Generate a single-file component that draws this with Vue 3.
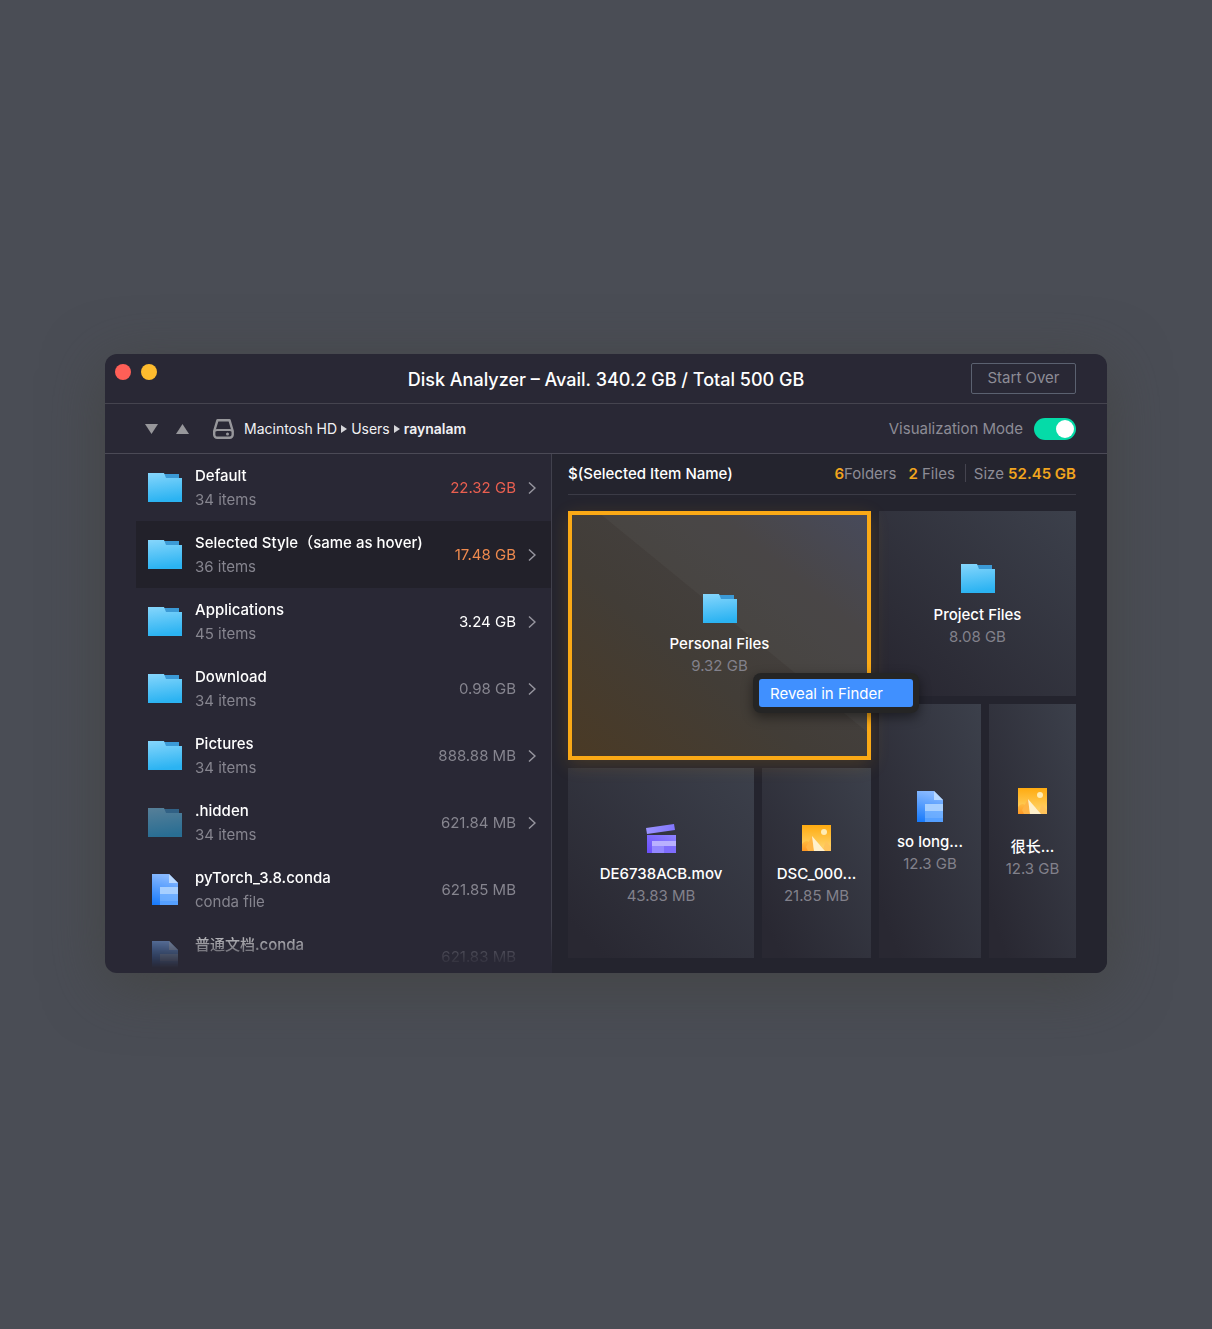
<script setup>
import { ref } from 'vue'

const visualization = ref(true)

const rows = [
  { name: 'Default', sub: '34 items', size: '22.32 GB', tone: 'hot', icon: 'folder', open: true },
  { name: 'Selected Style（same as hover)', sub: '36 items', size: '17.48 GB', tone: 'warm', icon: 'folder', open: true, selected: true },
  { name: 'Applications', sub: '45 items', size: '3.24 GB', tone: 'plain', icon: 'folder', open: true },
  { name: 'Download', sub: '34 items', size: '0.98 GB', tone: 'dim', icon: 'folder', open: true },
  { name: 'Pictures', sub: '34 items', size: '888.88 MB', tone: 'dim', icon: 'folder', open: true },
  { name: '.hidden', sub: '34 items', size: '621.84 MB', tone: 'dim', icon: 'folder', open: true, ghost: true },
  { name: 'pyTorch_3.8.conda', sub: 'conda file', size: '621.85 MB', tone: 'dim', icon: 'file' },
  { name: '普通文档.conda', sub: '', size: '621.83 MB', tone: 'dim', icon: 'file', faded: true },
]

const columns = [
  {
    key: 'left',
    top: { name: 'Personal Files', size: '9.32 GB', icon: 'folder', selected: true },
    bottom: [
      { name: 'DE6738ACB.mov', size: '43.83 MB', icon: 'movie' },
      { name: 'DSC_000...', size: '21.85 MB', icon: 'image' },
    ],
  },
  {
    key: 'right',
    top: { name: 'Project Files', size: '8.08 GB', icon: 'folder' },
    bottom: [
      { name: 'so long...', size: '12.3 GB', icon: 'file' },
      { name: '很长...', size: '12.3 GB', icon: 'image', cjk: true },
    ],
  },
]
</script>

<template>
  <main class="page">
    <svg class="defs" width="0" height="0" aria-hidden="true">
      <defs>
        <linearGradient id="g-folder" x1="0" y1="0" x2="0.15" y2="1">
          <stop offset="0" stop-color="#86d6fc" />
          <stop offset="1" stop-color="#2bb3f2" />
        </linearGradient>
        <linearGradient id="g-file" x1="0.2" y1="0" x2="0" y2="1">
          <stop offset="0" stop-color="#86b8ff" />
          <stop offset="1" stop-color="#1478fb" />
        </linearGradient>
        <linearGradient id="g-movie" x1="1" y1="0" x2="0" y2="1">
          <stop offset="0" stop-color="#8f84ff" />
          <stop offset="1" stop-color="#6a4dfa" />
        </linearGradient>
        <linearGradient id="g-clap" x1="0" y1="0" x2="1" y2="0">
          <stop offset="0" stop-color="#9b93ff" />
          <stop offset="1" stop-color="#8276fd" />
        </linearGradient>
        <linearGradient id="g-image" x1="0" y1="0" x2="0" y2="1">
          <stop offset="0" stop-color="#ffab10" />
          <stop offset="1" stop-color="#ffd874" />
        </linearGradient>
        <linearGradient id="g-hill" x1="0" y1="0" x2="0" y2="1">
          <stop offset="0" stop-color="#ffbb40" />
          <stop offset="1" stop-color="#ff9824" />
        </linearGradient>
        <symbol id="folder" viewBox="0 0 34 29">
          <path d="M15 1h16v6H15z" fill="#3b9ad6" />
          <path d="M0 0h16l2 5h16v24H0z" fill="url(#g-folder)" />
        </symbol>
        <symbol id="file" viewBox="0 0 26 31">
          <path d="M0 0h17l9 9v22H0z" fill="url(#g-file)" />
          <path d="M17 0l9 9h-9z" fill="#b9d9ff" />
          <path d="M8 13h18v18H8z" fill="#7cb7ff" fill-opacity=".75" />
          <path d="M8 13h18v7H8z" fill="#b4d7ff" fill-opacity=".8" />
          <path d="M8 27h18v4H8z" fill="#4f9bff" fill-opacity=".7" />
        </symbol>
        <symbol id="movie" viewBox="0 0 30 29">
          <path d="M0 4L28 0l1 6L1 10z" fill="url(#g-clap)" />
          <path d="M1 11h29v18H1z" fill="url(#g-movie)" />
          <path d="M6 17h24v12H6z" fill="#9387ff" />
          <path d="M18 22h12v7H18z" fill="#7f6dfc" />
          <path d="M6 17h24v5H6z" fill="#b9b0ff" />
        </symbol>
        <symbol id="image" viewBox="0 0 29 26">
          <path d="M0 0h29v26H0z" fill="url(#g-image)" />
          <circle cx="22" cy="7" r="3" fill="#ffecb4" />
          <path d="M0 19c2-3 5-4 7-2l5 9H0z" fill="url(#g-hill)" />
          <path d="M10 11L4 22l2 4h6z" fill="#ffb445" />
          <path d="M18 20l1 6h4z" fill="#ffb445" />
          <path d="M24 16l-3 8 2 2h6v-4z" fill="#ffc35a" />
          <path d="M10 11l13 15H12z" fill="#fff0cc" />
        </symbol>
      </defs>
    </svg>

    <section class="window">
      <header class="titlebar">
        <div class="lights">
          <button class="light close" aria-label="Close"></button>
          <button class="light minimize" aria-label="Minimize"></button>
        </div>
        <h1 class="title">Disk Analyzer – Avail. 340.2 GB / Total 500 GB</h1>
        <button class="start-over">Start Over</button>
      </header>

      <div class="toolbar">
        <div class="sort">
          <button aria-label="Sort descending">
            <svg width="13" height="10" viewBox="0 0 13 10"><path d="M0 0h13L6.500 10z" fill="#97979b" /></svg>
          </button>
          <button aria-label="Sort ascending">
            <svg width="13" height="10" viewBox="0 0 13 10"><path d="M0 10h13L6.500 0z" fill="#97979b" /></svg>
          </button>
        </div>
        <svg class="drive" width="21" height="20" viewBox="0 0 21 20" fill="none" stroke="#97979b" stroke-width="2.400">
          <path d="M4.500 1.200h12l3.200 10.800v3.800a3 3 0 0 1-3 3H4.200a3 3 0 0 1-3-3V12z" stroke-linejoin="round" />
          <path d="M1.500 12c1-1 2-1 3-1h12c1 0 2 0 3 1" stroke-width="2" />
          <circle cx="14.500" cy="15" r="1.500" fill="#97979b" stroke="none" />
        </svg>
        <nav class="crumbs">
          <a href="#hd">Macintosh HD</a>
          <svg width="6" height="8" viewBox="0 0 6 8"><path d="M0 0l6 4-6 4z" fill="#d5d5d9" /></svg>
          <a href="#users">Users</a>
          <svg width="6" height="8" viewBox="0 0 6 8"><path d="M0 0l6 4-6 4z" fill="#d5d5d9" /></svg>
          <a href="#raynalam" class="current">raynalam</a>
        </nav>
        <label class="mode" for="visualization">Visualization Mode</label>
        <input id="visualization" v-model="visualization" class="switch" type="checkbox" />
      </div>

      <div class="body">
        <div class="sidebar">
          <ul class="list">
            <li v-for="row in rows" :key="row.name">
              <button class="row" :class="{ selected: row.selected, faded: row.faded }">
                <span class="row-icon" :class="{ ghost: row.ghost }">
                  <svg :class="row.icon"><use :href="'#' + row.icon" /></svg>
                </span>
                <span class="row-text">
                  <span class="row-name">{{ row.name }}</span>
                  <span class="row-sub">{{ row.sub }}</span>
                </span>
                <span class="row-size" :class="row.tone">{{ row.size }}</span>
                <svg class="chevron" width="8" height="14" viewBox="0 0 8 14" fill="none">
                  <path v-if="row.open" d="M1 1.500l6 5.500-6 5.500" stroke="#97969f" stroke-width="1.500" />
                </svg>
              </button>
            </li>
          </ul>
        </div>

        <div class="detail">
          <div class="summary">
            <h2 class="summary-name">$(Selected Item Name)</h2>
            <span class="stat"><b>6</b>Folders</span>
            <span class="stat files"><b>2</b> Files</span>
            <span class="divider"></span>
            <span class="stat">Size <b>52.45 GB</b></span>
          </div>

          <div class="treemap">
            <div v-for="col in columns" :key="col.key" class="column" :class="col.key">
              <button class="tile" :class="{ selected: col.top.selected }">
                <span class="tile-icon"><svg :class="col.top.icon"><use :href="'#' + col.top.icon" /></svg></span>
                <span class="tile-name">{{ col.top.name }}</span>
                <span class="tile-size">{{ col.top.size }}</span>
              </button>
              <div class="split">
                <button v-for="tile in col.bottom" :key="tile.name" class="tile" :class="{ cjk: tile.cjk }">
                  <span class="tile-icon"><svg :class="tile.icon"><use :href="'#' + tile.icon" /></svg></span>
                  <span class="tile-name">{{ tile.name }}</span>
                  <span class="tile-size">{{ tile.size }}</span>
                </button>
              </div>
            </div>
            <div class="menu" role="menu">
              <button role="menuitem">Reveal in Finder</button>
            </div>
          </div>
        </div>
      </div>
    </section>
  </main>
</template>

<style>
body {
  background: #4a4d55;
}
</style>

<style scoped>
* {
  box-sizing: border-box;
}
.page {
  min-height: 100vh;
  display: flex;
  align-items: center;
  padding: 0 105px 2px;
  font-family: Inter, "Noto Sans CJK SC", sans-serif;
  font-size: 15px;
  color: #fff;
}
.defs {
  position: absolute;
}
button {
  font: inherit;
  color: inherit;
  background: none;
  border: 0;
  padding: 0;
  margin: 0;
}
h1,
h2,
ul {
  margin: 0;
  padding: 0;
  list-style: none;
}
svg {
  display: block;
  flex: none;
}
.folder {
  width: 34px;
  height: 29px;
}
.file {
  width: 26px;
  height: 31px;
}
.movie {
  width: 30px;
  height: 29px;
}
.image {
  width: 29px;
  height: 26px;
}
.window {
  flex: 1;
  min-width: 0;
  border-radius: 12px;
  overflow: hidden;
  background: #292835;
  box-shadow: 0 12px 60px rgba(66, 68, 66, 0.9);
}
.titlebar {
  display: grid;
  grid-template-columns: 1fr auto 1fr;
  align-items: center;
  height: 50px;
  padding: 0 31px 0 10px;
  border-bottom: 1px solid #45444f;
}
.lights {
  display: flex;
  gap: 10px;
  align-self: start;
  padding-top: 10px;
  margin-right: -21px;
}
.light {
  width: 16px;
  height: 16px;
  border-radius: 50%;
}
.close {
  background: #ff5f57;
}
.minimize {
  background: #febc2e;
}
.title {
  font-size: 18px;
  font-weight: 500;
  line-height: 24px;
  padding: 3px 0 0 21px;
}
.start-over {
  justify-self: end;
  width: 105px;
  height: 31px;
  padding-bottom: 2px;
  border: 1px solid #5b6170;
  border-radius: 2px;
  color: #8d8c96;
}
.toolbar {
  display: flex;
  align-items: center;
  height: 50px;
  padding: 0 31px 0 40px;
  border-bottom: 1px solid #4b4a56;
}
.sort {
  display: flex;
  gap: 18px;
}
.drive {
  margin: 0 10px 0 24px;
}
.crumbs {
  display: flex;
  align-items: center;
  gap: 4px;
  flex: 1;
  font-size: 14px;
}
.crumbs a {
  color: #f1f1f3;
  text-decoration: none;
}
.crumbs .current {
  font-weight: 600;
}
.mode {
  color: #8d8c96;
}
.switch {
  appearance: none;
  width: 42px;
  height: 22px;
  margin: 0 0 0 11px;
  padding: 2px;
  border-radius: 11px;
  background: #5b6170;
  display: flex;
}
.switch::before {
  content: "";
  width: 18px;
  height: 18px;
  border-radius: 50%;
  background: #fff;
}
.switch:checked {
  background: #05dba8;
  justify-content: flex-end;
}
.body {
  display: grid;
  grid-template-columns: minmax(0, 447fr) minmax(0, 555fr);
  height: 519px;
}
.sidebar {
  overflow: hidden;
  padding-left: 31px;
  border-right: 1px solid #41414d;
  mask-image: linear-gradient(#000 468px, transparent 514px);
}
.row {
  display: flex;
  align-items: center;
  width: 100%;
  height: 67px;
  padding: 0 15px 0 12px;
  text-align: left;
}
.row.selected {
  background: #22212a;
}
.row-icon {
  display: flex;
  justify-content: center;
  width: 34px;
}
.ghost {
  opacity: 0.5;
}
.faded .row-icon {
  opacity: 0.8;
}
.row-text {
  flex: 1;
  min-width: 0;
  margin-left: 13px;
  white-space: nowrap;
}
.row-name,
.row-sub {
  display: block;
  height: 24px;
  line-height: 24px;
}
.row-name {
  font-weight: 500;
}
.row-sub {
  color: #86858f;
}
.row-size {
  margin-right: 12px;
}
.hot {
  color: #ea5f50;
}
.warm {
  color: #ef8a4e;
}
.dim {
  color: #86858f;
}
.detail {
  display: flex;
  flex-direction: column;
  padding: 0 31px 15px 16px;
  background: #24242e;
}
.summary {
  display: flex;
  align-items: center;
  height: 41px;
  padding-bottom: 2px;
  border-bottom: 1px solid #3b3b46;
  white-space: nowrap;
}
.summary-name {
  flex: 1;
  font-size: 15px;
  font-weight: 500;
}
.stat {
  color: #8d8c96;
}
.stat b {
  font-weight: 600;
  color: #f2a51e;
}
.files {
  margin-left: 12px;
}
.divider {
  width: 1px;
  height: 18px;
  margin: 0 8px 0 10px;
  background: #45444f;
}
.treemap {
  position: relative;
  flex: 1;
  display: grid;
  grid-template-columns: minmax(0, 303fr) minmax(0, 197fr);
  gap: 8px;
  margin-top: 16px;
}
.column,
.split {
  display: grid;
  gap: 8px;
}
.left {
  grid-template-rows: 249fr 190fr;
}
.right {
  grid-template-rows: 185fr 254fr;
}
.left .split {
  grid-template-columns: minmax(0, 186fr) minmax(0, 109fr);
}
.right .split {
  grid-template-columns: minmax(0, 102fr) minmax(0, 87fr);
}
.tile {
  display: flex;
  flex-direction: column;
  align-items: center;
  justify-content: center;
  white-space: nowrap;
  background: linear-gradient(to top right, #292832 10%, #3c404b);
}
.tile.selected {
  position: relative;
  z-index: 1;
  padding-bottom: 5px;
  border: 4px solid #faa916;
  background: linear-gradient(to top right, #4a3a25, #423d37 40%, #444142 75%, #424556);
  box-shadow: 0 5px 18px rgba(250, 165, 20, 0.16);
}
.tile.selected::before {
  content: "";
  position: absolute;
  inset: 0;
  z-index: -1;
  background: rgba(255, 255, 255, 0.03);
  clip-path: polygon(10% 0, 100% 0, 100% 90%);
}
.tile-icon {
  display: flex;
  align-items: center;
  height: 38px;
  margin-bottom: 6px;
}
.cjk .tile-icon {
  margin-bottom: 16px;
}
.tile-name {
  line-height: 22px;
  font-weight: 500;
}
.tile-size {
  line-height: 22px;
  color: #82818b;
}
.menu {
  position: absolute;
  z-index: 2;
  left: 185px;
  top: 162px;
  padding: 6px;
  border-radius: 8px;
  background: #252525;
  box-shadow: 0 4px 12px rgba(0, 0, 0, 0.45);
}
.menu button {
  display: block;
  width: 154px;
  height: 28px;
  padding-left: 11px;
  border-radius: 3px;
  background: #4090ff;
  text-align: left;
}
</style>
